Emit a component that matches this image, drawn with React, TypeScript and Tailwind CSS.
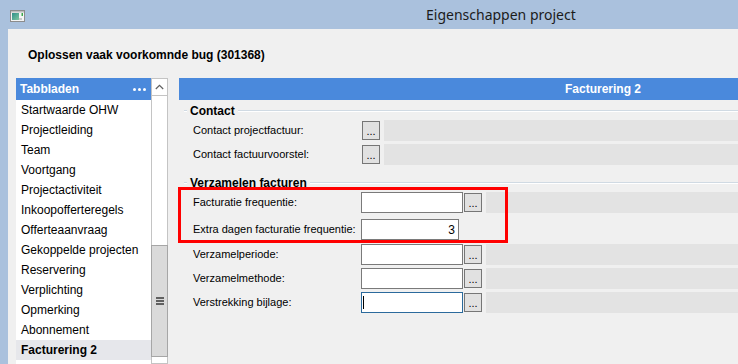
import React from "react";

function Btn() {
  return (
    <div className="w-[18px] h-[19px] shrink-0 border border-[#767676] bg-[#e1e1e1] flex items-end justify-center text-[11px] leading-[10px] pb-[3px] text-black">
      ...
    </div>
  );
}

function Field({ ml }: { ml: string }) {
  return <div className={`flex-1 h-[21px] bg-[#e3e3e3] ${ml}`} />;
}

function GroupHeader({ title, className }: { title: string; className: string }) {
  return (
    <div className={`flex items-center h-[18px] shrink-0 ${className}`}>
      <div className="ml-[5px] w-[3px] h-[2px] border-t border-[#d0dae3] bg-white" />
      <span className="px-[3px] font-bold text-[12px] leading-[14px] text-black">{title}</span>
      <div className="flex-1 h-[2px] border-t border-[#d0dae3] bg-white" />
    </div>
  );
}

function Label({ text }: { text: string }) {
  return (
    <div className="w-[182px] shrink-0 pl-[14px] text-[11px] leading-[13px] text-black whitespace-nowrap">
      {text}
    </div>
  );
}

function InputRow({
  label,
  className,
  focused,
}: {
  label: string;
  className: string;
  focused?: boolean;
}) {
  return (
    <div className={`flex items-center h-[21px] shrink-0 ${className}`}>
      <Label text={label} />
      <div
        className={`w-[102px] h-[21px] shrink-0 bg-white border flex items-center ${
          focused ? "border-[#2b6a9c]" : "border-[#7a7a7a]"
        }`}
      >
        {focused ? <span className="ml-[1px] w-px h-[13px] bg-black" /> : null}
      </div>
      <div className="ml-[1px]">
        <Btn />
      </div>
      <Field ml="ml-[4px]" />
    </div>
  );
}

function ContactRow({ label, className }: { label: string; className: string }) {
  return (
    <div className={`flex items-center h-[21px] shrink-0 ${className}`}>
      <Label text={label} />
      <div className="ml-[1px]">
        <Btn />
      </div>
      <Field ml="ml-[4px]" />
    </div>
  );
}

export default function App() {
  const items = [
    "Startwaarde OHW",
    "Projectleiding",
    "Team",
    "Voortgang",
    "Projectactiviteit",
    "Inkoopofferteregels",
    "Offerteaanvraag",
    "Gekoppelde projecten",
    "Reservering",
    "Verplichting",
    "Opmerking",
    "Abonnement",
  ];
  return (
    <div className="w-[738px] h-[364px] overflow-hidden bg-[#aac1dd] flex flex-col font-['Liberation_Sans',Arial,sans-serif] text-black">
      {/* title bar */}
      <div className="h-[29px] shrink-0 flex items-center">
        <svg className="ml-[10px] mt-[2px]" width="15" height="12" viewBox="0 0 15 12">
          <defs>
            <linearGradient id="ig" x1="0" y1="0" x2="1" y2="1">
              <stop offset="0" stopColor="#2f8f8a" />
              <stop offset="1" stopColor="#7fc7a0" />
            </linearGradient>
          </defs>
          <rect x="0.5" y="0.5" width="14" height="11" fill="#f4f4f4" stroke="#8c8c8c" />
          <rect x="1" y="1" width="13" height="1.5" fill="#bcbcbc" />
          <rect x="2" y="3" width="7" height="7" fill="url(#ig)" />
          <rect x="11.5" y="3" width="1.5" height="3" fill="#3aa84a" />
          <rect x="9" y="8" width="3" height="2" fill="#c8c8c8" />
        </svg>
        <div className="ml-[401px] font-['Noto_Sans',sans-serif] text-[14px] leading-[18px] text-[#1b1b1b]">
          Eigenschappen project
        </div>
      </div>

      {/* window content */}
      <div className="flex-1 min-h-0 ml-[8px] bg-[#f0f0f0] flex flex-col">
        <div className="h-[49px] shrink-0 pl-[20px] pt-[19px] text-[12px] leading-[14px] font-bold text-black">
          Oplossen vaak voorkomnde bug (301368)
        </div>

        <div className="flex flex-1 min-h-0 pl-[8px]">
          {/* left panel */}
          <div className="flex w-[152px] shrink-0">
            <div className="w-[135px] shrink-0 bg-white flex flex-col">
              <div className="h-[22px] shrink-0 bg-[#4a89dc] flex items-center justify-between pl-[4px] pr-[5px]">
                <span className="text-white font-bold text-[12px] leading-[14px]">Tabbladen</span>
                <span className="flex gap-[2px] mt-[1px]">
                  <span className="w-[3px] h-[3px] bg-white rounded-full" />
                  <span className="w-[3px] h-[3px] bg-white rounded-full" />
                  <span className="w-[3px] h-[3px] bg-white rounded-full" />
                </span>
              </div>
              {items.map((t) => (
                <div key={t} className="h-[20px] shrink-0 pl-[5px] text-[12px] leading-[20px] text-black whitespace-nowrap">
                  {t}
                </div>
              ))}
              <div className="h-[20px] shrink-0 pl-[5px] text-[12px] leading-[20px] font-bold bg-[#e6e7eb] text-black whitespace-nowrap">
                Facturering 2
              </div>
            </div>
            {/* scrollbar */}
            <div className="w-[17px] shrink-0 bg-white border border-[#c4c4c4] flex flex-col">
              <div className="h-[17px] shrink-0 border-b border-[#c4c4c4] flex items-center justify-center">
                <svg width="9" height="6" viewBox="0 0 9 6">
                  <path d="M0.8 5 L4.5 1.3 L8.2 5" fill="none" stroke="#606060" strokeWidth="1.2" />
                </svg>
              </div>
              <div className="h-[149px] shrink-0" />
              <div className="h-[112px] shrink-0 -mx-px bg-[#dadada] border border-[#a6a6a6] flex flex-col items-center justify-center gap-[1px]">
                <span className="w-[8px] h-[2px] bg-[#606060]" />
                <span className="w-[8px] h-[2px] bg-[#606060]" />
                <span className="w-[8px] h-[2px] bg-[#606060]" />
              </div>
            </div>
          </div>

          {/* right panel */}
          <div className="flex-1 min-w-0 ml-[11px] relative flex flex-col">
            <div className="h-[22px] shrink-0 bg-[#4a89dc] flex items-center pl-[386px]">
              <span className="text-white font-bold text-[12px] leading-[14px] whitespace-nowrap">Facturering 2</span>
            </div>

            <GroupHeader title="Contact" className="mt-[2px]" />
            <ContactRow label="Contact projectfactuur:" className="" />
            <ContactRow label="Contact factuurvoorstel:" className="mt-[3px]" />

            <GroupHeader title="Verzamelen facturen" className="mt-[9px]" />
            <InputRow label="Facturatie frequentie:" className="" />
            <div className="flex items-center h-[21px] shrink-0 mt-[6px]">
              <Label text="Extra dagen facturatie frequentie:" />
              <div className="w-[98px] h-[21px] shrink-0 bg-white border border-[#7a7a7a] flex items-center justify-end pr-[3px] text-[12px] leading-[14px] text-black">
                3
              </div>
            </div>
            <InputRow label="Verzamelperiode:" className="mt-[4px]" />
            <InputRow label="Verzamelmethode:" className="mt-[3px]" />
            <InputRow label="Verstrekking bijlage:" className="mt-[3px]" focused />

            <div className="absolute left-[-1px] top-[109px] w-[330px] h-[56px] border-[3px] border-[#ff0000] pointer-events-none" />
          </div>
        </div>
      </div>
    </div>
  );
}
